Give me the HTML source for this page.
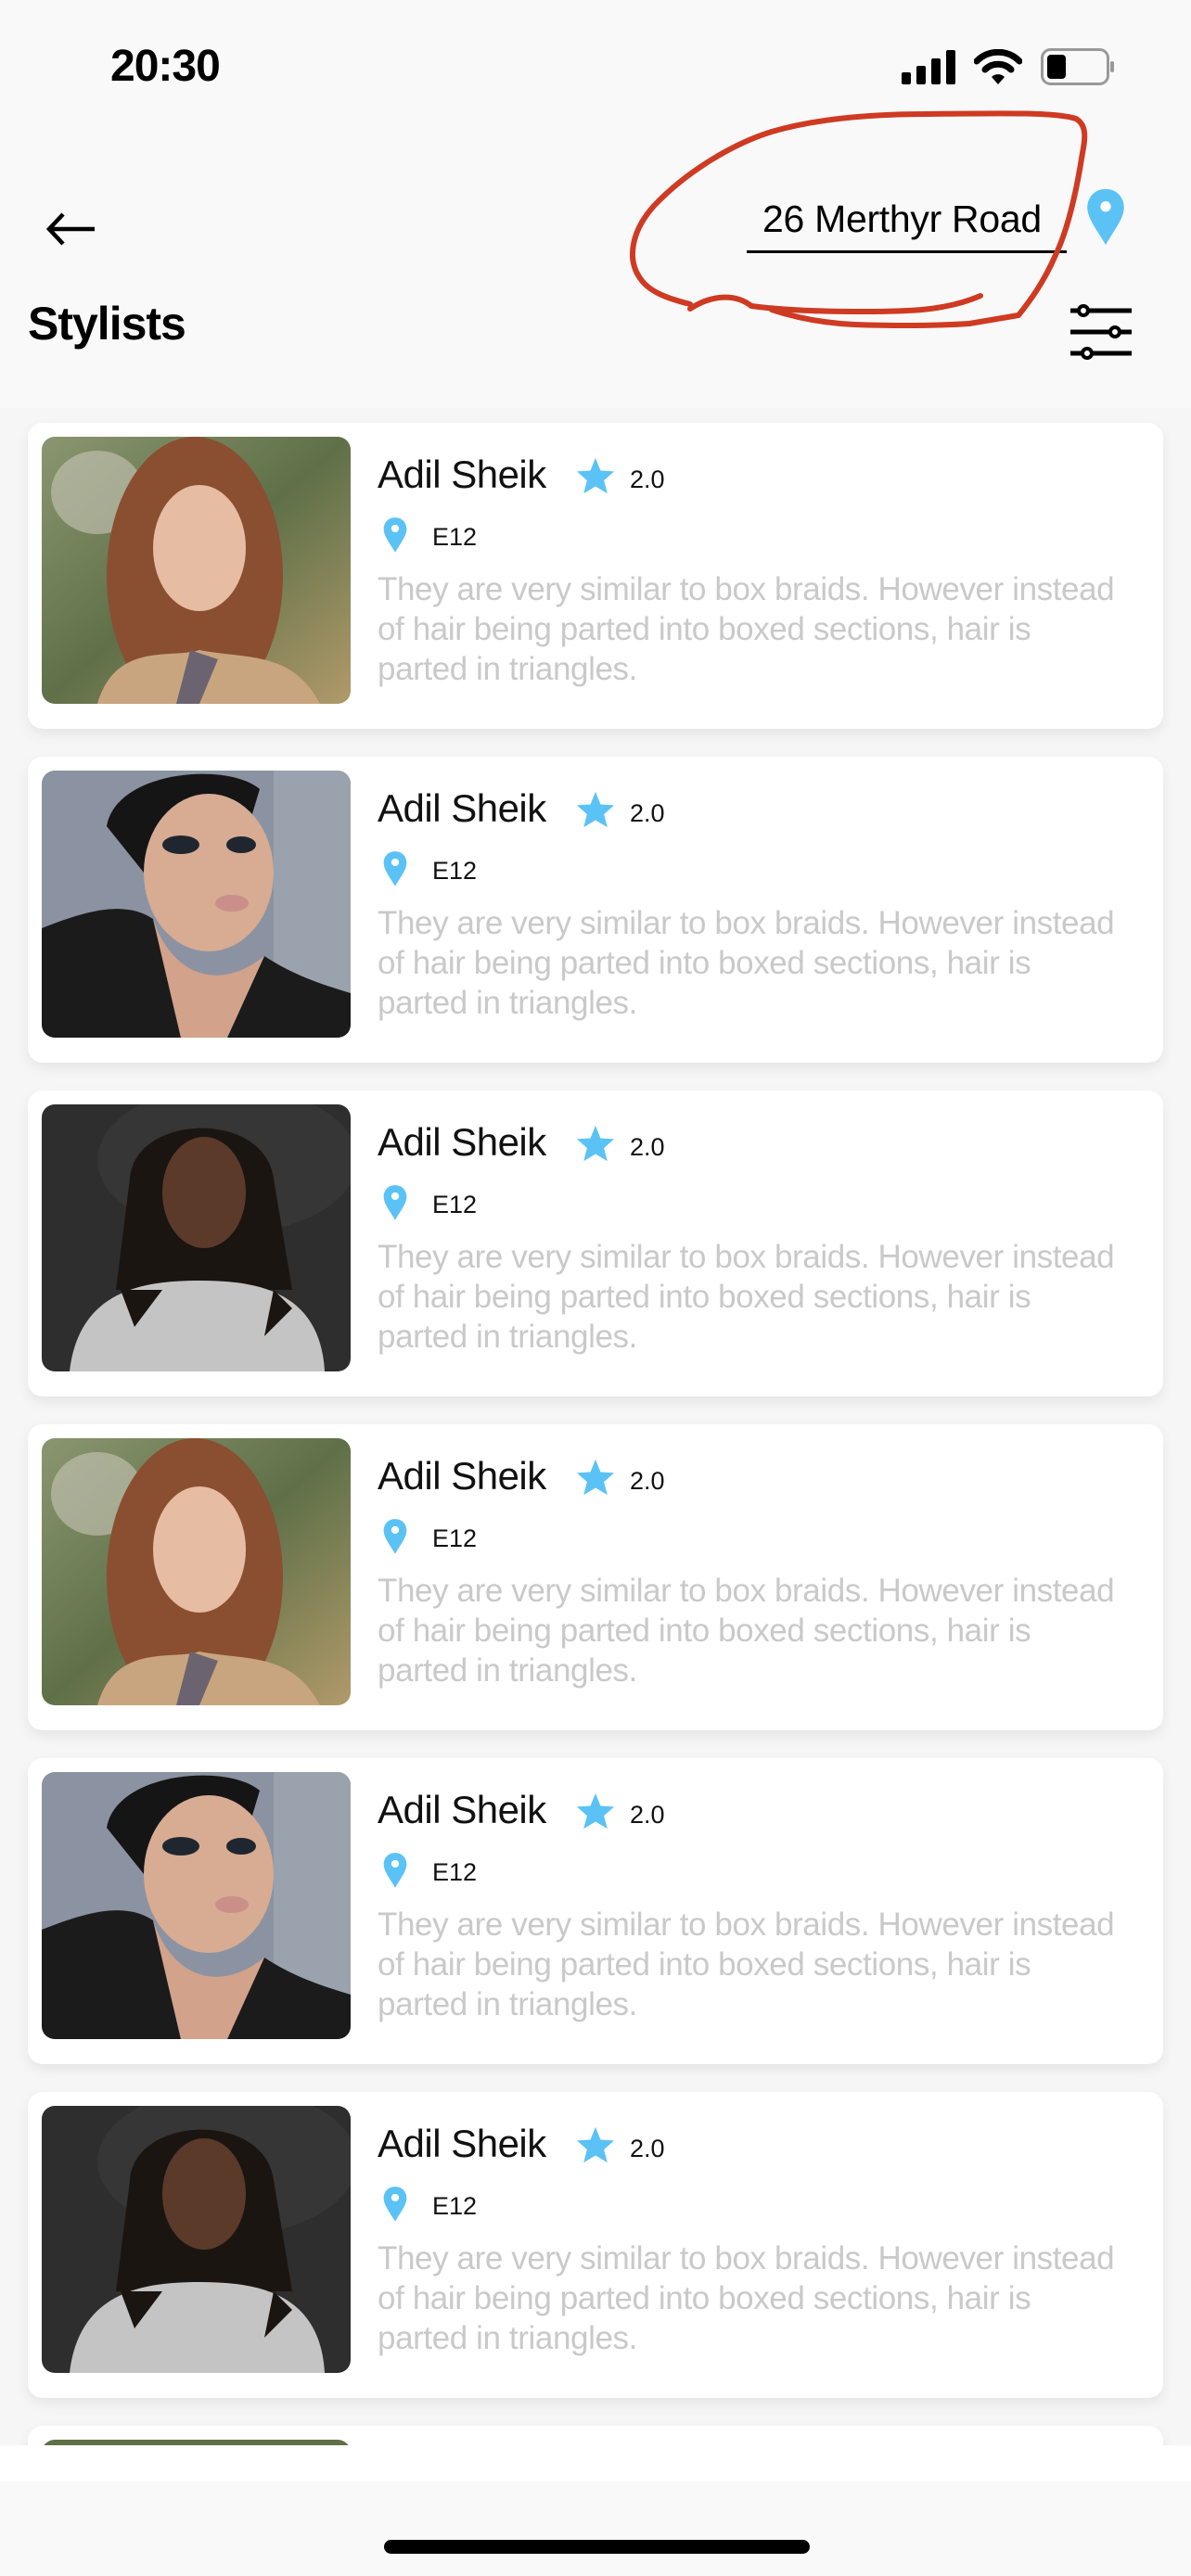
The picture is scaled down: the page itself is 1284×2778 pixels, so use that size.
<!DOCTYPE html>
<html><head><meta charset="utf-8"><style>
*{margin:0;padding:0;box-sizing:border-box}
body{width:1284px;height:2778px;background:#f9f9f9;position:relative;overflow:hidden;font-family:"Liberation Sans",sans-serif}
.abs{position:absolute}
.list{position:absolute;left:0;top:440px;width:1284px;height:2197px;overflow:hidden;background:#f6f6f6}
.card{position:absolute;left:30px;width:1224px;height:330px;background:#fff;border-radius:16px;box-shadow:0 6px 14px rgba(0,0,0,0.07)}
.ph{position:absolute;left:15px;top:15px;width:333px;height:288px;border-radius:14px;overflow:hidden}
.name{position:absolute;left:377px;top:32px;font-size:42px;color:#111;letter-spacing:-0.5px}
.star{position:absolute;left:589px;top:36px}
.rate{position:absolute;left:649px;top:46px;font-size:27px;color:#111}
.pin{position:absolute;left:380px;top:101px}
.loc{position:absolute;left:436px;top:108px;font-size:27px;color:#111}
.desc{position:absolute;left:377px;top:158px;width:800px;font-size:35px;line-height:43px;color:#c9c9c9;letter-spacing:-0.4px}
</style></head><body>

<div class="abs" style="left:119px;top:44px;font-size:48px;font-weight:bold;color:#000;letter-spacing:-1px">20:30</div>
<svg class="abs" style="left:972px;top:54px" width="60" height="37" viewBox="0 0 60 37"><rect x="0" y="24" width="10" height="13" rx="2"/><rect x="16" y="17" width="10" height="20" rx="2"/><rect x="32" y="9" width="10" height="28" rx="2"/><rect x="48" y="0" width="10" height="37" rx="2"/></svg>
<svg class="abs" style="left:1050px;top:53px" width="52" height="38" viewBox="0 0 52 38"><path d="M3 13 A32 32 0 0 1 49 13" stroke="#000" stroke-width="7" fill="none" stroke-linecap="round"/><path d="M12 22 A20 20 0 0 1 40 22" stroke="#000" stroke-width="7" fill="none" stroke-linecap="round"/><path d="M19 30 L26 38 L33 30 A10 10 0 0 0 19 30Z" fill="#000"/></svg>
<svg class="abs" style="left:1122px;top:52px" width="82" height="40" viewBox="0 0 82 40"><rect x="1.5" y="1.5" width="71" height="37" rx="9" fill="none" stroke="#999" stroke-width="3"/><rect x="7" y="7" width="20" height="26" rx="4" fill="#000"/><rect x="75" y="14" width="4" height="12" rx="2" fill="#999"/></svg>

<svg class="abs" style="left:48px;top:228px" width="56" height="38" viewBox="0 0 56 38"><path d="M54 19 H6 M20 3 L5 19 L20 35" stroke="#000" stroke-width="4.5" fill="none"/></svg>

<div class="abs" style="left:822px;top:213px;font-size:41px;color:#000;letter-spacing:-0.3px">26 Merthyr Road</div>
<div class="abs" style="left:805px;top:270px;width:345px;height:3px;background:#000"></div>
<svg class="abs" style="left:1170px;top:202px" width="44" height="64" viewBox="0 0 46 68"><path d="M23 2 C10 2 2 12 2 23 C2 36 14 50 23 66 C32 50 44 36 44 23 C44 12 36 2 23 2Z" fill="#5bc2f5"/><circle cx="23" cy="22" r="6" fill="#fff"/></svg>

<svg class="abs" style="left:0;top:0" width="1284" height="440" viewBox="0 0 1284 440" fill="none" stroke="#cf3a22" stroke-width="6" stroke-linecap="round" stroke-linejoin="round">
<path d="M744 328 C720 322 700 315 690 300 C676 280 680 250 705 222 C740 185 790 155 832 142 C880 128 940 123 1000 123 C1080 122 1140 121 1160 128 C1172 135 1170 150 1167 165 C1160 210 1150 250 1138 275 C1125 305 1110 325 1098 340 L1045 349 C1000 352 950 351 921 350 C880 348 850 340 832 334"/>
<path d="M1057 319 C1020 335 980 336 930 336 C880 336 840 334 810 330 C795 318 770 316 744 333"/>
</svg>

<div class="abs" style="left:30px;top:320px;font-size:50px;font-weight:bold;color:#000;letter-spacing:-1px">Stylists</div>
<svg class="abs" style="left:1150px;top:326px" width="72" height="64" viewBox="0 0 72 64" stroke="#000" stroke-width="5" fill="none"><line x1="4" y1="9" x2="70" y2="9"/><line x1="4" y1="32" x2="70" y2="32"/><line x1="4" y1="55" x2="70" y2="55"/><circle cx="18" cy="9" r="5" fill="#fff" stroke-width="4"/><circle cx="52" cy="32" r="5" fill="#fff" stroke-width="4"/><circle cx="22" cy="55" r="5" fill="#fff" stroke-width="4"/></svg>

<div class="list">
<div class="card" style="top:16px">
<div class="ph"><svg width="333" height="288" viewBox="0 0 333 288"><defs><linearGradient id="ga" x1="0" y1="0" x2="1" y2="1"><stop offset="0" stop-color="#8a9670"/><stop offset=".5" stop-color="#5f7048"/><stop offset="1" stop-color="#b09a6a"/></linearGradient></defs><rect width="333" height="288" fill="url(#ga)"/><ellipse cx="60" cy="60" rx="50" ry="45" fill="#c9c7b8" opacity=".6"/><ellipse cx="165" cy="150" rx="95" ry="150" fill="#8a4f30"/><ellipse cx="170" cy="120" rx="50" ry="68" fill="#e6bca2"/><path d="M60 288 C80 220 140 240 170 230 C220 240 270 230 300 288Z" fill="#c9a57f"/><path d="M145 288 L160 230 L190 240 L170 288Z" fill="#6b6470"/></svg></div>
<div class="name">Adil Sheik</div>
<svg class="star" width="46" height="42" viewBox="0 0 24 23"><path d="M12 1 L15 8.5 L23 9 L17 14.3 L19 22 L12 17.8 L5 22 L7 14.3 L1 9 L9 8.5Z" fill="#5bc2f5"/></svg>
<div class="rate">2.0</div>
<svg class="pin" width="32" height="40" viewBox="0 0 46 68"><path d="M23 2 C10 2 2 12 2 23 C2 36 14 50 23 66 C32 50 44 36 44 23 C44 12 36 2 23 2Z" fill="#5bc2f5"/><circle cx="23" cy="22" r="7" fill="#fff"/></svg>
<div class="loc">E12</div>
<div class="desc">They are very similar to box braids. However instead of hair being parted into boxed sections, hair is parted in triangles.</div>
</div>

<div class="card" style="top:376px">
<div class="ph"><svg width="333" height="288" viewBox="0 0 333 288"><rect width="333" height="288" fill="#8b93a2"/><rect x="250" width="83" height="288" fill="#9aa2ad"/><path d="M70 60 C80 0 200 -10 235 20 L220 70 L110 110Z" fill="#151515"/><ellipse cx="180" cy="110" rx="70" ry="85" fill="#d7ac93"/><ellipse cx="150" cy="80" rx="20" ry="10" fill="#202630"/><ellipse cx="215" cy="80" rx="16" ry="9" fill="#202630"/><ellipse cx="205" cy="143" rx="18" ry="9" fill="#c98f88"/><path d="M0 170 C50 150 90 140 120 160 L150 288 L0 288Z" fill="#1b1b1b"/><path d="M200 288 L240 200 C270 220 300 230 333 240 L333 288Z" fill="#1b1b1b"/><path d="M120 160 C140 220 190 240 240 200 L200 288 L150 288Z" fill="#d2a28a"/></svg></div>
<div class="name">Adil Sheik</div>
<svg class="star" width="46" height="42" viewBox="0 0 24 23"><path d="M12 1 L15 8.5 L23 9 L17 14.3 L19 22 L12 17.8 L5 22 L7 14.3 L1 9 L9 8.5Z" fill="#5bc2f5"/></svg>
<div class="rate">2.0</div>
<svg class="pin" width="32" height="40" viewBox="0 0 46 68"><path d="M23 2 C10 2 2 12 2 23 C2 36 14 50 23 66 C32 50 44 36 44 23 C44 12 36 2 23 2Z" fill="#5bc2f5"/><circle cx="23" cy="22" r="7" fill="#fff"/></svg>
<div class="loc">E12</div>
<div class="desc">They are very similar to box braids. However instead of hair being parted into boxed sections, hair is parted in triangles.</div>
</div>

<div class="card" style="top:736px">
<div class="ph"><svg width="333" height="288" viewBox="0 0 333 288"><rect width="333" height="288" fill="#2e2e2e"/><ellipse cx="200" cy="60" rx="140" ry="80" fill="#3c3c3c" opacity=".6"/><path d="M95 80 C100 10 240 5 250 80 L270 200 L80 200Z" fill="#1b1512"/><ellipse cx="175" cy="95" rx="45" ry="60" fill="#5b3a2a"/><path d="M30 288 C40 200 110 190 170 190 C230 190 300 200 305 288Z" fill="#c4c4c4"/><path d="M85 200 L100 240 L130 200Z M250 200 L240 250 L270 220Z" fill="#1b1512"/></svg></div>
<div class="name">Adil Sheik</div>
<svg class="star" width="46" height="42" viewBox="0 0 24 23"><path d="M12 1 L15 8.5 L23 9 L17 14.3 L19 22 L12 17.8 L5 22 L7 14.3 L1 9 L9 8.5Z" fill="#5bc2f5"/></svg>
<div class="rate">2.0</div>
<svg class="pin" width="32" height="40" viewBox="0 0 46 68"><path d="M23 2 C10 2 2 12 2 23 C2 36 14 50 23 66 C32 50 44 36 44 23 C44 12 36 2 23 2Z" fill="#5bc2f5"/><circle cx="23" cy="22" r="7" fill="#fff"/></svg>
<div class="loc">E12</div>
<div class="desc">They are very similar to box braids. However instead of hair being parted into boxed sections, hair is parted in triangles.</div>
</div>

<div class="card" style="top:1096px">
<div class="ph"><svg width="333" height="288" viewBox="0 0 333 288"><rect width="333" height="288" fill="url(#ga)"/><ellipse cx="60" cy="60" rx="50" ry="45" fill="#c9c7b8" opacity=".6"/><ellipse cx="165" cy="150" rx="95" ry="150" fill="#8a4f30"/><ellipse cx="170" cy="120" rx="50" ry="68" fill="#e6bca2"/><path d="M60 288 C80 220 140 240 170 230 C220 240 270 230 300 288Z" fill="#c9a57f"/><path d="M145 288 L160 230 L190 240 L170 288Z" fill="#6b6470"/></svg></div>
<div class="name">Adil Sheik</div>
<svg class="star" width="46" height="42" viewBox="0 0 24 23"><path d="M12 1 L15 8.5 L23 9 L17 14.3 L19 22 L12 17.8 L5 22 L7 14.3 L1 9 L9 8.5Z" fill="#5bc2f5"/></svg>
<div class="rate">2.0</div>
<svg class="pin" width="32" height="40" viewBox="0 0 46 68"><path d="M23 2 C10 2 2 12 2 23 C2 36 14 50 23 66 C32 50 44 36 44 23 C44 12 36 2 23 2Z" fill="#5bc2f5"/><circle cx="23" cy="22" r="7" fill="#fff"/></svg>
<div class="loc">E12</div>
<div class="desc">They are very similar to box braids. However instead of hair being parted into boxed sections, hair is parted in triangles.</div>
</div>

<div class="card" style="top:1456px">
<div class="ph"><svg width="333" height="288" viewBox="0 0 333 288"><rect width="333" height="288" fill="#8b93a2"/><rect x="250" width="83" height="288" fill="#9aa2ad"/><path d="M70 60 C80 0 200 -10 235 20 L220 70 L110 110Z" fill="#151515"/><ellipse cx="180" cy="110" rx="70" ry="85" fill="#d7ac93"/><ellipse cx="150" cy="80" rx="20" ry="10" fill="#202630"/><ellipse cx="215" cy="80" rx="16" ry="9" fill="#202630"/><ellipse cx="205" cy="143" rx="18" ry="9" fill="#c98f88"/><path d="M0 170 C50 150 90 140 120 160 L150 288 L0 288Z" fill="#1b1b1b"/><path d="M200 288 L240 200 C270 220 300 230 333 240 L333 288Z" fill="#1b1b1b"/><path d="M120 160 C140 220 190 240 240 200 L200 288 L150 288Z" fill="#d2a28a"/></svg></div>
<div class="name">Adil Sheik</div>
<svg class="star" width="46" height="42" viewBox="0 0 24 23"><path d="M12 1 L15 8.5 L23 9 L17 14.3 L19 22 L12 17.8 L5 22 L7 14.3 L1 9 L9 8.5Z" fill="#5bc2f5"/></svg>
<div class="rate">2.0</div>
<svg class="pin" width="32" height="40" viewBox="0 0 46 68"><path d="M23 2 C10 2 2 12 2 23 C2 36 14 50 23 66 C32 50 44 36 44 23 C44 12 36 2 23 2Z" fill="#5bc2f5"/><circle cx="23" cy="22" r="7" fill="#fff"/></svg>
<div class="loc">E12</div>
<div class="desc">They are very similar to box braids. However instead of hair being parted into boxed sections, hair is parted in triangles.</div>
</div>

<div class="card" style="top:1816px">
<div class="ph"><svg width="333" height="288" viewBox="0 0 333 288"><rect width="333" height="288" fill="#2e2e2e"/><ellipse cx="200" cy="60" rx="140" ry="80" fill="#3c3c3c" opacity=".6"/><path d="M95 80 C100 10 240 5 250 80 L270 200 L80 200Z" fill="#1b1512"/><ellipse cx="175" cy="95" rx="45" ry="60" fill="#5b3a2a"/><path d="M30 288 C40 200 110 190 170 190 C230 190 300 200 305 288Z" fill="#c4c4c4"/><path d="M85 200 L100 240 L130 200Z M250 200 L240 250 L270 220Z" fill="#1b1512"/></svg></div>
<div class="name">Adil Sheik</div>
<svg class="star" width="46" height="42" viewBox="0 0 24 23"><path d="M12 1 L15 8.5 L23 9 L17 14.3 L19 22 L12 17.8 L5 22 L7 14.3 L1 9 L9 8.5Z" fill="#5bc2f5"/></svg>
<div class="rate">2.0</div>
<svg class="pin" width="32" height="40" viewBox="0 0 46 68"><path d="M23 2 C10 2 2 12 2 23 C2 36 14 50 23 66 C32 50 44 36 44 23 C44 12 36 2 23 2Z" fill="#5bc2f5"/><circle cx="23" cy="22" r="7" fill="#fff"/></svg>
<div class="loc">E12</div>
<div class="desc">They are very similar to box braids. However instead of hair being parted into boxed sections, hair is parted in triangles.</div>
</div>

<div class="card" style="top:2176px">
<div class="ph" style="background:#5f7048"></div>
</div>
</div>

<div class="abs" style="left:0;top:2637px;width:1284px;height:39px;background:#fff"></div>
<div class="abs" style="left:414px;top:2739px;width:459px;height:15px;border-radius:8px;background:#000"></div>
</body></html>
